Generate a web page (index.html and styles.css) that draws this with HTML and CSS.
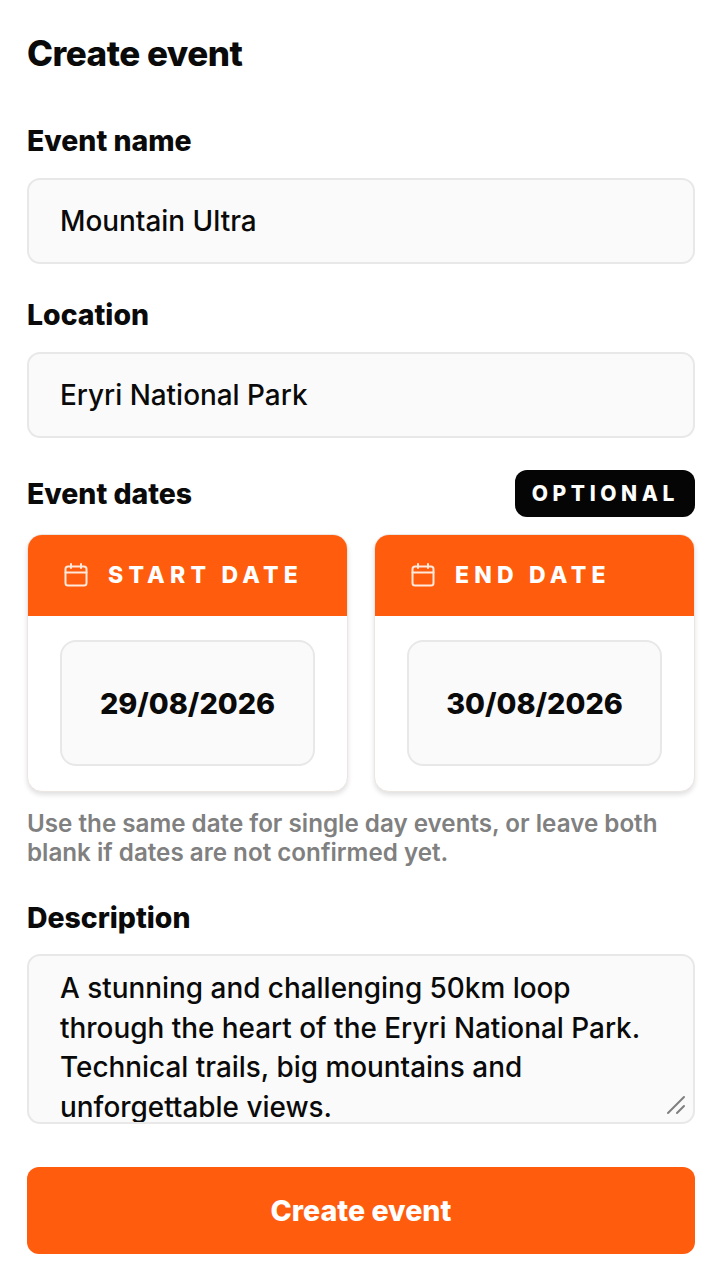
FILE: index.html
```html
<!DOCTYPE html>
<html lang="en">
<head>
    <meta charset="UTF-8">
    <meta name="viewport" content="width=device-width, initial-scale=1.0">
    <title>Create event</title>
    <link rel="stylesheet" href="styles.css">
</head>
<body>

<form class="page">
    <h1>Create event</h1>

    <div class="form-group first">
        <label for="name">Event name</label>
        <input type="text" id="name" class="field" value="Mountain Ultra">
    </div>

    <div class="form-group">
        <label for="location">Location</label>
        <input type="text" id="location" class="field" value="Eryri National Park">
    </div>

    <div class="dates-head">
        <span class="label">Event dates</span>
        <span class="badge">OPTIONAL</span>
    </div>

    <div class="dates">
        <div class="date-card">
            <div class="date-title">
                <svg class="cal" viewBox="0 0 24 24" fill="none" stroke="currentColor" stroke-width="2" stroke-linecap="round" stroke-linejoin="round">
                    <rect x="1.5" y="3.5" width="21" height="19" rx="2.5"/>
                    <path d="M1.5 9.5h21M7 1v4M17 1v4"/>
                </svg>
                <span>START DATE</span>
            </div>
            <div class="date-body">
                <input type="text" class="date-value" value="29/08/2026">
            </div>
        </div>
        <div class="date-card">
            <div class="date-title">
                <svg class="cal" viewBox="0 0 24 24" fill="none" stroke="currentColor" stroke-width="2" stroke-linecap="round" stroke-linejoin="round">
                    <rect x="1.5" y="3.5" width="21" height="19" rx="2.5"/>
                    <path d="M1.5 9.5h21M7 1v4M17 1v4"/>
                </svg>
                <span>END DATE</span>
            </div>
            <div class="date-body">
                <input type="text" class="date-value" value="30/08/2026">
            </div>
        </div>
    </div>

    <p class="help">Use the same date for single day events, or leave both blank if dates are not confirmed yet.</p>

    <div class="form-group desc">
        <label for="description">Description</label>
        <div class="textarea-wrap">
            <textarea id="description" class="area">A stunning and challenging 50km loop through the heart of the Eryri National Park. Technical trails, big mountains and unforgettable views.</textarea>
            <svg class="grip" viewBox="0 0 20 20" fill="none" stroke="#7f7f7f" stroke-width="2" stroke-linecap="round">
                <path d="M2 18L18 2M11 18l7-7"/>
            </svg>
        </div>
    </div>

    <button type="button" class="submit-btn">Create event</button>
</form>

</body>
</html>
```

FILE: styles.css
```css
* {
    box-sizing: border-box;
}

body {
    font-family: Inter, "Liberation Sans", sans-serif;
    margin: 0;
    padding: 0;
    background-color: #fff;
    color: #0a0a0a;
}

.page {
    padding: 33px 27px 26px;
}

h1 {
    margin: 0;
    font-size: 35px;
    line-height: 40px;
    font-weight: 800;
    letter-spacing: -0.5px;
}

.form-group {
    margin-top: 34px;
}

.form-group.first {
    margin-top: 51px;
}

label, .label {
    display: block;
    font-size: 28.4px;
    line-height: 34px;
    font-weight: 800;
}

.field {
    display: block;
    width: 100%;
    height: 86px;
    margin-top: 20px;
    padding: 0 31px;
    font: 500 27.9px Inter, sans-serif;
    color: #0a0a0a;
    background-color: #fafafa;
    border: 2px solid #e8e8e8;
    border-radius: 13px;
    outline: none;
}

.dates-head {
    display: flex;
    justify-content: space-between;
    align-items: center;
    margin-top: 32px;
    height: 47px;
}

.badge {
    height: 47px;
    padding: 0 16px 0 17px;
    display: flex;
    align-items: center;
    background-color: #050505;
    color: #fff;
    font-size: 21px;
    font-weight: 800;
    letter-spacing: 4.6px;
    border-radius: 12px;
}

.dates {
    display: grid;
    grid-template-columns: 1fr 1fr;
    gap: 26px;
    margin-top: 17px;
}

.date-card {
    height: 258px;
    background-color: #fff;
    border: 1px solid #ebe6e2;
    border-radius: 15px;
    box-shadow: 0 3px 5px rgba(0, 0, 0, 0.12);
    overflow: hidden;
}

.date-title {
    height: 81px;
    display: flex;
    align-items: center;
    gap: 20px;
    padding: 0 0 2px 36px;
    background-color: #ff5c0d;
    color: #fff;
    font-size: 23px;
    font-weight: 800;
    letter-spacing: 5.2px;
}

.cal {
    width: 24px;
    height: 24px;
    flex-shrink: 0;
    color: #ffe9dc;
}

.date-body {
    padding: 24px 32px;
}

.date-value {
    display: block;
    width: 100%;
    height: 126px;
    text-align: center;
    font: 800 28.8px Inter, sans-serif;
    color: #0a0a0a;
    background-color: #fafafa;
    border: 2px solid #e8e8e8;
    border-radius: 16px;
    outline: none;
}

.help {
    margin: 17px 0 0;
    font-size: 24.2px;
    line-height: 29px;
    font-weight: 600;
    color: #808080;
}

.textarea-wrap {
    position: relative;
    margin-top: 19px;
}

.area {
    display: block;
    width: 100%;
    height: 170px;
    padding: 13px 31px 0;
    font: 500 27.9px/39.5px Inter, sans-serif;
    color: #0a0a0a;
    background-color: #fafafa;
    border: 2px solid #e8e8e8;
    border-radius: 13px;
    outline: none;
    resize: none;
    overflow: hidden;
}

.grip {
    position: absolute;
    right: 9px;
    bottom: 9px;
    width: 20px;
    height: 20px;
}

.submit-btn {
    display: block;
    width: 100%;
    height: 87px;
    margin-top: 43px;
    background-color: #ff5c0d;
    color: #fff;
    border: none;
    border-radius: 12px;
    font: 800 28.6px Inter, sans-serif;
    cursor: pointer;
}
```
